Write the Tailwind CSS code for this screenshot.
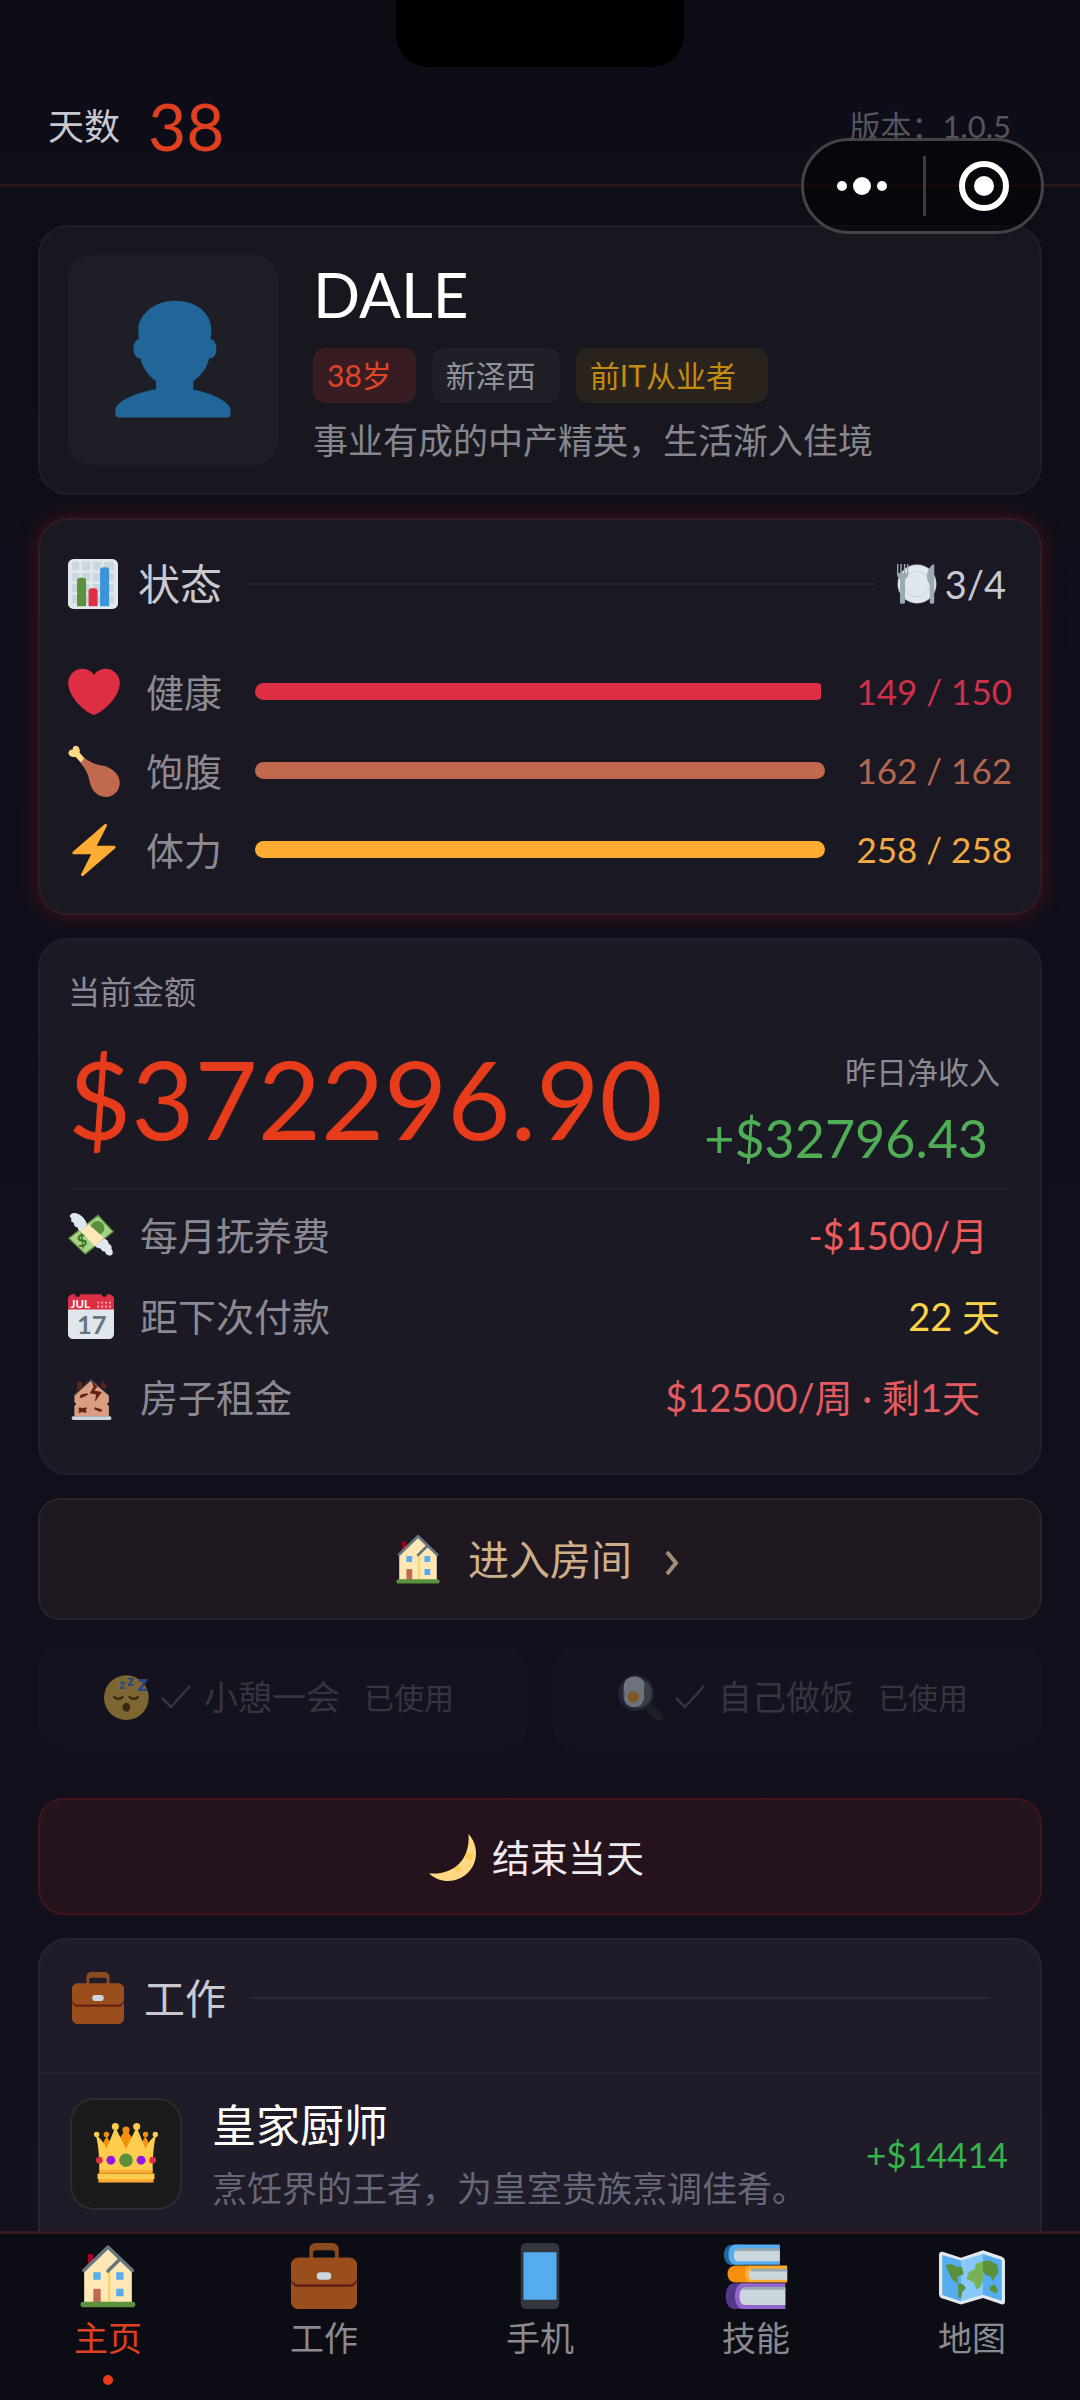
<!DOCTYPE html>
<html lang="zh-CN">
<head>
  <meta charset="UTF-8">
  <meta name="viewport" content="width=device-width, initial-scale=1.0">
  <title>主页</title>
  <script src="https://cdn.jsdelivr.net/npm/@tailwindcss/browser@4"></script>
</head>
<body class="bg-[#0d0d16] font-['Lato','Noto_Sans_CJK_SC',sans-serif] text-[#c9c9d1] leading-none">

  <!-- Shared icons -->
  <svg class="hidden" aria-hidden="true">
    <symbol id="icon-house" viewBox="0 0 36 36">
      <path fill="#A0041E" d="M7 6h3v6H7z"/>
      <path fill="#FFE8B6" d="M5 14.500 18 2.500l13 12V33H5z"/>
      <path fill="#FFCC4D" d="M18.200 16h1V33h-1z"/>
      <path fill="none" stroke="#66757F" stroke-width="1.900" stroke-linecap="round" stroke-linejoin="round" d="M4.800 15 18 2.200 31.300 15M18 15.300l6.300-6.300"/>
      <path fill="#55ACEE" d="M10 16h4v4h-4zM22.500 16h4v4h-4zM22.500 25h4v4h-4z"/>
      <path fill="#C1694F" d="M10 25h4v8h-4z"/>
      <path fill="#5C913B" d="M33 33.500c0 .8-.7 1.500-1.500 1.500h-27a1.500 1.500 0 0 1 0-3h27c.8 0 1.500.7 1.500 1.500z"/>
    </symbol>
    <symbol id="icon-briefcase" viewBox="0 0 36 36">
      <path fill="#8A4B20" d="M26 9V3.500C26 1.500 24.500 0 22.500 0h-9C11.500 0 10 1.500 10 3.500V9h2V5.500C12 4.500 12.800 4 13.500 4h9c.8 0 1.500.5 1.500 1.500V9z"/>
      <path fill="#9A4E1C" d="M36 32c0 2.200-1.800 4-4 4H4c-2.200 0-4-1.800-4-4V12c0-2.200 1.800-4 4-4h28c2.200 0 4 1.800 4 4z"/>
      <path fill="#662113" d="M0 18v2c0 2.200 1.800 4 4 4h28c2.200 0 4-1.800 4-4v-2z"/>
      <path fill="#9A4E1C" d="M36 18.500c0 2.200-1.800 4-4 4H4c-2.200 0-4-1.800-4-4V12c0-2.200 1.800-4 4-4h28c2.200 0 4 1.800 4 4z"/>
      <rect x="14" y="16" width="8" height="4" rx="2" fill="#CCD6DD"/>
    </symbol>
    <symbol id="icon-check" viewBox="0 0 32 32">
      <path d="M2 17l9 9L30 5" fill="none" stroke="currentColor" stroke-width="2.500"/>
    </symbol>
  </svg>

  <div class="relative h-dvh flex flex-col overflow-hidden bg-linear-to-b from-[#0d0d17] to-[#15101f]">
    <!-- Notch -->
    <div class="absolute top-0 left-1/2 -translate-x-1/2 w-72 h-[67px] bg-black rounded-b-[32px]"></div>

    <!-- Mini program capsule -->
    <div class="absolute z-20 top-[138px] right-9 w-[243px] h-24 flex items-center border-3 border-[#434346] rounded-full bg-black/50">
      <button type="button" aria-label="更多" class="flex-1 pr-1 flex items-center justify-center gap-1.5">
        <span class="size-2.5 rounded-full bg-white"></span>
        <span class="size-[18px] rounded-full bg-white"></span>
        <span class="size-2.5 rounded-full bg-white"></span>
      </button>
      <span class="w-[3px] h-15 bg-[#3c3c40]"></span>
      <button type="button" aria-label="关闭" class="flex-1 flex justify-center">
        <svg class="size-[50px]" viewBox="0 0 50 50"><circle cx="25" cy="25" r="22" fill="none" stroke="#fff" stroke-width="6"/><circle cx="25" cy="25" r="10" fill="#fff"/></svg>
      </button>
    </div>

    <!-- Header -->
    <header class="shrink-0 pt-17 border-b-3 border-[#2b1517]">
      <div class="h-29 pl-12 pr-[69px] flex items-center justify-between">
        <div class="flex items-center gap-7">
          <span class="text-[36px]">天数</span>
          <span class="text-[66px] text-[#e0401f]">38</span>
        </div>
        <span class="text-[31px] text-[#55555e]">版本：1.0.5</span>
      </div>
    </header>

    <main class="flex-1 min-h-0 overflow-hidden px-[38px] pt-[38px] flex flex-col gap-[23px] *:shrink-0">
      <!-- Profile -->
      <section class="p-7 flex items-center gap-[35px] bg-[#18171f] border-2 border-[#1f1f27] rounded-[30px]">
        <div class="size-[210px] shrink-0 flex items-center justify-center rounded-3xl bg-[#1e1e26]">
          <svg class="size-[122px]" viewBox="0 0 36 36"><path fill="#226699" d="M24 26.799v-2.566c2-1.348 4.080-3.779 4.703-6.896.186.103.206.170.413.170.991 0 1.709-1.287 1.709-2.873 0-1.562-.823-2.827-1.794-2.865.187-.674.293-1.577.293-2.735C29.324 5.168 26 .527 18.541.527c-6.629 0-10.777 4.641-10.777 8.507 0 1.123.069 2.043.188 2.755-.911.137-1.629 1.352-1.629 2.845 0 1.587.804 2.873 1.796 2.873.206 0 .025-.067.209-.170C8.952 20.453 11 22.885 13 24.232v2.414c-5 .645-12 3.437-12 6.230v1.061C1 35 2.076 35 3.137 35h29.725C33.924 35 35 35 35 33.938v-1.061c0-2.615-6-5.225-11-6.078z"/></svg>
        </div>
        <div>
          <h1 class="text-[62px] text-white">DALE</h1>
          <div class="mt-[23px] flex gap-4 text-[30px]">
            <span class="h-[55px] pl-3.5 pr-6 flex items-center rounded-xl bg-[#371d21] text-[#e0452a]">38岁</span>
            <span class="h-[55px] pl-3.5 pr-6 flex items-center rounded-xl bg-[#1f1f28] text-[#92929b]">新泽西</span>
            <span class="h-[55px] pl-3.5 pr-8 flex items-center rounded-xl bg-[#2a221d] text-[#c28c12]">前IT从业者</span>
          </div>
          <p class="mt-5 text-[35px] text-[#86868f]">事业有成的中产精英，生活渐入佳境</p>
        </div>
      </section>

      <!-- Status -->
      <section class="px-7 pt-7 pb-6 bg-[#1a1822] border-2 border-[#2e1c26] rounded-[30px] shadow-[0_0_18px_2px_rgba(110,20,30,0.500)]">
        <div class="h-18 pr-1.5 flex items-center">
          <svg class="size-[50px]" viewBox="0 0 36 36">
            <rect width="36" height="36" rx="4" fill="#E1E8ED"/>
            <path fill="#CCD6DD" d="M3 2h5v6H3zM10 2h6v6h-6zM18 2h6v6h-6zM26 2h7v6h-7zM3 10h5v6H3zM10 10h6v6h-6zM18 10h6v6h-6zM26 10h7v6h-7zM3 18h5v6H3zM10 18h6v6h-6zM18 18h6v6h-6zM26 18h7v6h-7zM3 26h5v6H3zM10 26h6v6h-6zM18 26h6v6h-6zM26 26h7v6h-7z"/>
            <path fill="#5C913B" d="M13 34V15.500c0-1-1-2-2-2H8.500c-1 0-2 1-2 2V34z"/>
            <path fill="#DD2E44" d="M21.300 34V23c0-1-1-2-2-2h-2.500c-1 0-2 1-2 2v11z"/>
            <path fill="#3B94D9" d="M29.600 34V8c0-1-1-2-2-2h-2.500c-1 0-2 1-2 2v26z"/>
          </svg>
          <h2 class="ml-5 text-[42px]">状态</h2>
          <div class="ml-6 mr-5 flex-1 h-0.5 bg-[#23222b]"></div>
          <svg class="size-10" viewBox="0 0 36 36">
            <circle cx="18" cy="18" r="17.500" fill="#CCD6DD"/><circle cx="18" cy="18" r="16.500" fill="#E1E8ED"/><circle cx="18" cy="18" r="11.500" fill="none" stroke="#CCD6DD"/>
            <path fill="#99AAB5" d="M0 0h1.200v8H3V0h1.300v8h1.900V0h1.300v8H9V0h1.200v9c0 2-1 3.500-3 4.500V35c0 1-4.500 1-4.500 0V13.500C1 12.500 0 11 0 9zM33.500 0c-4 1-6.500 7-6.500 11 0 4 1 6 2.500 7v17c0 1 4 1 4 0z"/>
          </svg>
          <span class="ml-2 text-[38px]">3/4</span>
        </div>
        <div class="mt-8">
          <div class="h-[79px] flex items-center">
            <svg class="size-13" viewBox="0 0 36 36"><path fill="#DD2E44" d="M35.885 11.833c0-5.450-4.418-9.868-9.867-9.868-3.308 0-6.227 1.633-8.018 4.129-1.791-2.496-4.710-4.129-8.017-4.129-5.450 0-9.868 4.417-9.868 9.868 0 .772.098 1.520.266 2.241C1.751 22.587 11.216 31.568 18 34.034c6.783-2.466 16.249-11.447 17.617-19.959.170-.721.268-1.469.268-2.242z"/></svg>
            <span class="ml-[26px] text-[38px] text-[#8b8a94]">健康</span>
            <div class="ml-[33px] flex-1 h-[17px] rounded-full overflow-hidden"><div class="h-full bg-[#dd2e44]" style="width:99.3%"></div></div>
            <span class="w-[187px] text-right text-[35px] text-[#cf3049]">149 / 150</span>
          </div>
          <div class="h-[79px] flex items-center">
            <svg class="size-13" viewBox="0 0 36 36">
              <path fill="#FFD983" d="M12.500 10.500 8 5.200C8.600 3.500 7.500.5 5.500.5 4 .5 3 1.700 3.300 3.100 1.500 3 .200 4.200.300 5.700c.2 2 3 3 4.900 2.500l4.500 5z"/>
              <path fill="#C1694F" d="M11.500 9c4 3 7.500 4.500 12 5.200 7 1 12.300 6.300 12.300 11.800 0 5.700-4 10-9.600 10-6 0-10-4.500-11.300-11-.8-4.600-2.800-8.600-6.200-12.500z"/>
            </svg>
            <span class="ml-[26px] text-[38px] text-[#8b8a94]">饱腹</span>
            <div class="ml-[33px] flex-1 h-[17px] rounded-full overflow-hidden"><div class="h-full bg-[#c1694f]" style="width:100%"></div></div>
            <span class="w-[187px] text-right text-[35px] text-[#b5664f]">162 / 162</span>
          </div>
          <div class="h-[79px] flex items-center">
            <svg class="size-13" viewBox="0 0 36 36"><path fill="#FFAC33" d="M32.938 15.651C32.792 15.260 32.418 15 32 15H19.925L26.890 1.458c.219-.426.106-.947-.271-1.243C26.437.071 26.218 0 26 0c-.233 0-.466.082-.653.243L18 6.588 3.347 19.243c-.316.273-.430.714-.284 1.105S3.582 21 4 21h12.075L9.110 34.542c-.219.426-.106.947.271 1.243.182.144.401.215.619.215.233 0 .466-.082.653-.243L18 29.412l14.653-12.655c.317-.273.430-.714.285-1.106z"/></svg>
            <span class="ml-[26px] text-[38px] text-[#8b8a94]">体力</span>
            <div class="ml-[33px] flex-1 h-[17px] rounded-full overflow-hidden"><div class="h-full bg-[#ffac33]" style="width:100%"></div></div>
            <span class="w-[187px] text-right text-[35px] text-[#f2ab42]">258 / 258</span>
          </div>
        </div>
      </section>

      <!-- Money -->
      <section class="px-7 pt-7 pb-9 bg-[#1b1924] border-2 border-[#211f2a] rounded-[30px] text-[#8b8a94]">
        <h2 class="h-12 flex items-center text-[32px]">当前金额</h2>
        <div class="h-41 mb-2 pr-3 flex items-center justify-between">
          <span class="text-[109px] leading-[140px] text-[#e63c1b]">$372296.90</span>
          <div class="pt-6 flex flex-col items-end">
            <span class="text-[31px]">昨日净收入</span>
            <span class="mt-6 pr-3 text-[52px] text-[#4fae55]">+$32796.43</span>
          </div>
        </div>
        <div class="pt-1 border-t-2 border-[#23212c]">
          <div class="h-[81px] flex items-center">
            <svg class="size-[46px]" viewBox="0 0 36 36">
              <path fill="#5C913B" d="M23.500 2 36 15.500 13.500 33.500 0 20.500z"/>
              <path fill="#A6D388" d="M23.500 3.500 34.500 15.300 13.500 32 1.500 20.500z"/>
              <circle cx="23" cy="12.500" r="5.500" fill="#5C913B"/>
              <text x="7" y="27" font-size="13" font-weight="700" fill="#3E721D" transform="rotate(-12 11 22)">$</text>
              <path fill="#FFE8B6" d="m10 15 6-5.500L28 20l-7 7z"/>
              <path fill="#E1E8ED" d="M2 2c2-2.500 7-1 9.500 2 2 2.500 4 5 3 7l-4.500 4c-2-.5-2.500-2-2.500-3-2 0-3-1.500-3-3.500C2.500 8 2 6.500 2.800 5 1.500 4.500 1 3 2 2zM21.500 26.500l6-5.500c3 0 4 2 4.500 4 2 .5 2.500 2.500 2 4 1.500 1.500 1.500 5-1 5-2.500.5-4-1.500-4-3-2 0-3-1-3.500-2.500-2 0-3.500-.5-4-2z"/>
            </svg>
            <span class="ml-[26px] text-[38px]">每月抚养费</span>
            <span class="ml-auto pr-6 text-[38px] text-[#ee5b5c]">-$1500/月</span>
          </div>
          <div class="h-[81px] flex items-center">
            <svg class="size-[46px]" viewBox="0 0 36 36">
              <path fill="#E0E7EC" d="M36 32c0 2.200-1.800 4-4 4H4c-2.200 0-4-1.800-4-4V9h36z"/>
              <path fill="#DD2F45" d="M4 1h1.500a2 2 0 0 0 4 0h17a2 2 0 0 0 4 0H32c2.200 0 4 1.800 4 4v8H0V5c0-2.200 1.800-4 4-4z"/>
              <text x="2" y="11.500" font-size="9" font-weight="700" fill="#fff">JUL</text>
              <path d="M23 7.500h11M23 10.500h11" stroke="#F4ABBA" stroke-width="1.500" stroke-dasharray="1.500 1.500"/>
              <text x="7" y="32" font-size="20" font-weight="700" fill="#66757F">17</text>
            </svg>
            <span class="ml-[26px] text-[38px]">距下次付款</span>
            <span class="ml-auto pr-3 text-[38px] text-[#fbd449]">22 天</span>
          </div>
          <div class="h-[81px] flex items-center">
            <svg class="size-[46px]" viewBox="0 0 36 36">
              <path fill="#292F33" d="m18 3 14 13-2 3H6l-2-3z"/><path fill="#662113" d="M7 6h4v7H7z"/>
              <path fill="#D99E82" d="M18 5 32 17v5l-1.500 1.500L32 25v8H5v-8l1.500-1.500L5 22v-5z"/>
              <path fill="#662113" d="m18 5 5 5-2.500 3 6 1-5.500 8 1-6-5-1 3-5zM10 16l5-1 1 1-5 2.500H9zM9 26l2 .8 3-.8.8 1-1 1.500 1 1-1 1-2.500-.8-2.500.8-.8-1 1-1-1-1zM21 26l5 1.500 1 1.500-2 .5-4.500-2zM26 5l4 4-1 3-3-2z"/>
              <path fill="#CCD6DD" d="M34 34.500c0 .8-.5 1.500-1.300 1.500H4.300a1.500 1.500 0 0 1 0-3h28.400c.8 0 1.300.7 1.300 1.500z"/>
            </svg>
            <span class="ml-[26px] text-[38px]">房子租金</span>
            <span class="ml-auto pr-8 text-[38px] text-[#e45b60]">$12500/周 · 剩1天</span>
          </div>
        </div>
      </section>

      <!-- Actions -->
      <button type="button" class="h-[122px] pr-2 flex items-center justify-center bg-[#1f1821] border-2 border-[#29242a] rounded-[22px] text-[41px] text-[#cdb08a]">
        <svg class="size-[52px]"><use href="#icon-house"/></svg>
        <span class="ml-6">进入房间</span>
        <svg class="ml-8 w-4 h-6 mt-2" viewBox="0 0 16 24"><path d="M3 1l9 11-9 11" fill="none" stroke="#a38d78" stroke-width="4"/></svg>
      </button>
      <div class="mb-6 grid grid-cols-2 gap-6 text-[#36353f]">
        <button type="button" disabled class="h-27 pr-2 flex items-center justify-center rounded-[28px] bg-[#14121e]">
          <svg class="size-[46px] opacity-45" viewBox="0 0 36 36">
            <circle cx="17.500" cy="18.500" r="17.500" fill="#FFCC4D"/>
            <ellipse cx="17.500" cy="26" rx="3" ry="3.500" fill="#664500"/>
            <path d="M8 18c1.500 2 5 2 6.500 0M20 18c1.500 2 5 2 6.500 0" fill="none" stroke="#664500" stroke-width="1.800" stroke-linecap="round"/>
            <g fill="#3B88FF" font-weight="900"><text x="12" y="12" font-size="10">z</text><text x="18" y="9" font-size="12">z</text><text x="26" y="13" font-size="18">z</text></g>
          </svg>
          <svg class="ml-2.5 size-8"><use href="#icon-check"/></svg>
          <span class="ml-3 text-[34px]">小憩一会</span>
          <span class="ml-6 text-[30px]">已使用</span>
        </button>
        <button type="button" disabled class="h-27 pr-2 flex items-center justify-center rounded-[28px] bg-[#14121e]">
          <svg class="size-[46px] opacity-45" viewBox="0 0 36 36">
            <path d="M24 26l8 8" stroke="#292F33" stroke-width="7" stroke-linecap="round"/>
            <circle cx="14" cy="15" r="14" fill="#2f3d4d"/><circle cx="15" cy="15" r="11.500" fill="#66757F"/>
            <path fill="#E1E8ED" d="M13 2c5 0 9 4 7.500 9-.8 3 .5 5 0 8-1 4.500-4 7-8 7-5 0-8.500-4-7.500-9 .6-3-.8-4-.5-8C5 5 8 2 13 2z"/>
            <circle cx="12" cy="18" r="4.500" fill="#FFAC33"/>
          </svg>
          <svg class="ml-2.5 size-8"><use href="#icon-check"/></svg>
          <span class="ml-3 text-[34px]">自己做饭</span>
          <span class="ml-6 text-[30px]">已使用</span>
        </button>
      </div>
      <button type="button" class="h-[117px] pr-2 flex items-center justify-center gap-4 bg-[#24131c] border-2 border-[#42151c] rounded-[26px] text-[38px] text-[#eeeaf2]">
        <svg class="size-12" viewBox="0 0 36 36"><path fill="#FFD983" d="M30.312.776C32 19 20 32 .776 30.312c8.199 7.717 21.091 7.588 29.107-.429C37.900 21.867 38.030 8.975 30.312.776z"/><path fill="#FFCC4D" d="M30.500 15a2 3 0 1 1 0 5 2 2.500 0 0 1 0-5zM22 25a2 2 0 1 1 1 4 2 2 0 0 1-1-4z"/></svg>
        <span>结束当天</span>
      </button>

      <!-- Job -->
      <section class="bg-[#1f1b29] border-2 border-[#27232f] rounded-t-[30px]">
        <div class="h-29 mb-4 pl-8 pr-[50px] flex items-center">
          <svg class="size-[52px]"><use href="#icon-briefcase"/></svg>
          <h2 class="ml-5 text-[41px]">工作</h2>
          <div class="ml-6 flex-1 h-0.5 bg-[#2a2634]"></div>
        </div>
        <div class="pl-[30px] pr-8 pt-6 pb-8 flex items-center border-t-2 border-[#27232f]">
          <div class="size-28 shrink-0 flex items-center justify-center rounded-3xl bg-[#1b1b1b] border-2 border-[#2d2b30]">
            <svg class="size-16" viewBox="0 0 36 36">
              <path fill="#F4900C" d="m4 14 3-6 4 6 7-10 7 10 4-6 3 6v6H4z"/><circle cx="7" cy="7" r="1.500" fill="#F4900C"/><circle cx="18" cy="4.500" r="2" fill="#F4900C"/><circle cx="29" cy="7" r="1.500" fill="#F4900C"/>
              <path fill="#FFCC4D" d="M1 7.500c2 1 4.500 4 6 7.500L12 3l6 12 6-12 5 12c1.500-3.500 4-6.500 6-7.500-1.500 5-2 12-2 20H3C3 19.500 2.500 12.500 1 7.500z"/>
              <g fill="#FFCC4D"><circle cx="1.500" cy="7" r="1.500"/><circle cx="12" cy="2.500" r="2"/><circle cx="24" cy="2.500" r="2"/><circle cx="34.500" cy="7" r="1.500"/></g>
              <path fill="#FFAC33" d="M3 27h30v2H3zM2.500 32h31v2h-31z"/><path fill="#FFCC4D" d="M2 29h32v3H2z"/>
              <circle cx="18" cy="21.500" r="3.800" fill="#5C913B"/><circle cx="9.500" cy="21.500" r="2.500" fill="#9115EA"/><circle cx="26.500" cy="21.500" r="2.500" fill="#9115EA"/><circle cx="3" cy="21.500" r="1.900" fill="#DD2E44"/><circle cx="33" cy="21.500" r="1.900" fill="#DD2E44"/>
            </svg>
          </div>
          <div class="ml-[30px] flex-1">
            <h3 class="text-[44px] text-white">皇家厨师</h3>
            <p class="mt-6 text-[35px] text-[#666879]">烹饪界的王者，为皇室贵族烹调佳肴。</p>
          </div>
          <span class="text-[35px] text-[#34b44a]">+$14414</span>
        </div>
      </section>
    </main>

    <!-- Tab bar -->
    <nav class="shrink-0 h-[169px] pt-[9px] grid grid-cols-5 bg-[#0c0d14] border-t-3 border-[#341a1f] text-[34px] text-[#8a8a92]">
      <a href="#" class="flex flex-col items-center text-[#e0401f]">
        <svg class="size-[66px]"><use href="#icon-house"/></svg>
        <span class="mt-3">主页</span>
        <span class="mt-5 size-2.5 rounded-full bg-[#e63c1b]"></span>
      </a>
      <a href="#" class="flex flex-col items-center">
        <svg class="size-[66px]"><use href="#icon-briefcase"/></svg>
        <span class="mt-3">工作</span>
      </a>
      <a href="#" class="flex flex-col items-center">
        <svg class="size-[66px]" viewBox="0 0 36 36">
          <rect x="7.500" width="21" height="36" rx="3" fill="#31373D"/>
          <path fill="#55ACEE" d="M9 5h18v26H9z"/>
        </svg>
        <span class="mt-3">手机</span>
      </a>
      <a href="#" class="flex flex-col items-center">
        <svg class="size-[66px]" viewBox="0 0 36 36">
          <path fill="#269" d="M5 1h6v11H5C2 12 .500 9.500.500 6.500S2 1 5 1z"/>
          <path fill="#55ACEE" d="M7 .8h24v11H7C4 11.800 3 9 3 6.300S4 .8 7 .8z"/>
          <path fill="#CCD6DD" d="M8 3.500h23v6.500H8C6.500 10 6 8.500 6 6.800s.5-3.300 2-3.300z"/><path fill="#99AAB5" d="M7.500 2.800H31v1.500H7z"/>
          <path fill="#F4900C" d="M7 12.300h8v9.200H7c-3 0-4.500-2-4.500-4.600S4 12.300 7 12.300z"/>
          <path fill="#FFAC33" d="M15 12.300h20v9.200H15c-2 0-3-2-3-4.600s1-4.600 3-4.600z"/>
          <path fill="#CCD6DD" d="M16 14.500h19V20H16c-1.300 0-2-1.200-2-2.700s.7-2.800 2-2.800z"/><path fill="#99AAB5" d="M15.500 14H35v1.500H15z"/>
          <path fill="#553788" d="M6 22h8v14H6c-3 0-4.500-3.500-4.500-7S3 22 6 22z"/>
          <path fill="#9266CC" d="M11 22h23v14H11c-3 0-4.500-3.500-4.500-7S8 22 11 22z"/>
          <path fill="#CCD6DD" d="M12 24.500h22v9.300H12c-2 0-3-2-3-4.600s1-4.700 3-4.700z"/><path fill="#99AAB5" d="M11.500 24H34v1.500H11z"/>
        </svg>
        <span class="mt-3">技能</span>
      </a>
      <a href="#" class="flex flex-col items-center">
        <svg class="size-[66px]" viewBox="0 0 36 36">
          <path fill="#E1E8ED" d="M0 6.500c0-1.500 1-2 2-1.700L12 8l12-4 10 3.300c1.200.4 2 1.200 2 2.500V32c0 1.300-1 1.700-2 1.400L24 30l-12 3.500L2 30.300c-1.300-.4-2-1.200-2-2.500z"/>
          <path fill="#55ACEE" d="m1.800 6.500 10.200 3v22.300l-10.200-3.400zM24 6l10.200 3.300v22.200L24 28.200z"/>
          <path fill="#88C9F9" d="M12 9.500 24 6v22.200l-12 3.600z"/>
          <path fill="#5C913B" d="M3.500 12 7 11.500l2.500 1.500h3l1 4-3.500 1.500.5 3.500-3-1.500-2-4zM10 22l3 .5 1.700 2.200-2 2-.7 3.500-1.500-.7V26zM24 10l4-.5 4 2.500.5 4-2 2.500-1 2.500-1.500-3-2.500-.5-1.500-2zM27.500 24l3-1.500 1.500 3-.5 2-3.500-1.500z"/>
          <path fill="#77B255" d="M24 10v10l-1.500 4-2 1.500-1.500-4-4-2 1.500-4 3-1 .5-3z"/>
        </svg>
        <span class="mt-3">地图</span>
      </a>
    </nav>
  </div>
</body>
</html>
